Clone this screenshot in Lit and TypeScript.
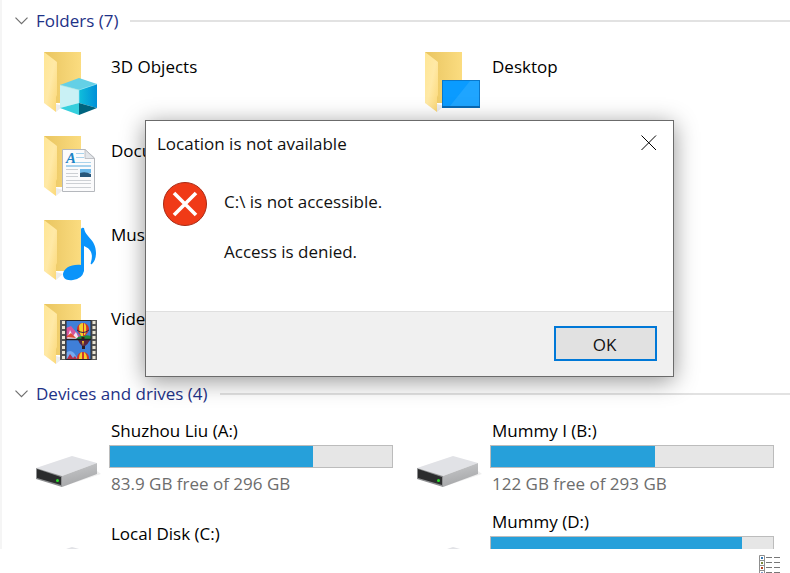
import { LitElement, html, css, svg, nothing } from "lit";
import { customElement, property } from "lit/decorators.js";

type Overlay = "cube" | "screen" | "document" | "note" | "film";

interface Folder {
  name: string;
  overlay: Overlay;
  first: boolean;
}

interface Drive {
  name: string;
  used?: number;
  free?: string;
}

const FOLDERS: Folder[] = [
  { name: "3D Objects", overlay: "cube", first: true },
  { name: "Desktop", overlay: "screen", first: false },
  { name: "Documents", overlay: "document", first: true },
  { name: "Music", overlay: "note", first: true },
  { name: "Videos", overlay: "film", first: true },
];

const DRIVES: Drive[] = [
  { name: "Shuzhou Liu (A:)", used: 72, free: "83.9 GB free of 296 GB" },
  { name: "Mummy I (B:)", used: 58, free: "122 GB free of 293 GB" },
  { name: "Local Disk (C:)" },
  { name: "Mummy (D:)", used: 89 },
];

const balloon = (x: number, y: number) => svg`
  <g transform="translate(${x} ${y})">
    <path d="M-6 -1a6 6 0 0 1 12 0c0 3-3 5-4 7h-4c-1-2-4-4-4-7z" fill="#d3342a"/>
    <path d="M-4 -4Q-4 2-2 6H0V-7Q-3-7-4-4z" fill="#f3cf2c"/>
    <path d="M1 -7Q4-6 3 2L2 5H1z" fill="#f3cf2c"/>
    <path d="M-6 0Q0 5 6 0" stroke="#30204f" stroke-width="1" fill="none"/>
    <rect x="-1.5" y="7" width="3" height="3" fill="#3a1c14"/>
  </g>`;

const OVERLAYS = {
  cube: svg`
    <path d="M44 27L62 33 44 39 25 34z" fill="#64d0e6"/>
    <path d="M25 34L44 39V52L25 57z" fill="#c9f1f5"/>
    <path d="M44 39L62 33V57L44 52z" fill="url(#cubeSide)"/>
    <path d="M25 57L44 52V64z" fill="#35cfdd"/>
    <path d="M44 52L62 57 44 64z" fill="#00647f"/>
    <path d="M25 34L44 39 62 33M44 39V52" stroke="#9be6f2" stroke-width=".6" fill="none"/>`,
  screen: svg`
    <rect x="26" y="29" width="38" height="28" fill="#0a78cc"/>
    <rect x="27" y="30" width="36" height="25" fill="#0a9bff"/>
    <path d="M63 30V55H34L54 30z" fill="#1fa5ff"/>
    <path d="M26 56h38" stroke="#065a9c" stroke-width="1"/>`,
  document: svg`
    <path d="M27.5 14.5H50L59.5 23V56.5H27.5z" fill="#fbfbfc" stroke="#b5b8bd"/>
    <path d="M50 14.5V23.5H59.5z" fill="#e3e6ea" stroke="#b5b8bd" stroke-width=".8"/>
    <path d="M41 18.5h8M41 22.5h8M41 27.5h15" stroke="#a9d3ec"/>
    <path d="M31 31h25" stroke="#8cc5e8" stroke-width="1.5"/>
    <path d="M31 34.5h12M31 38.5h12M31 41.5h12M31 45.5h25M31 48.5h25M31 52.5h25" stroke="#cdd0d4"/>
    <rect x="45" y="34" width="11" height="4" fill="#6db9ea"/>
    <path d="M45 38q5-2 11 1v3H45z" fill="#27577b"/>
    <text x="31" y="28" class="letter">A</text>`,
  note: svg`
    <path d="M46 10Q47 8 49 9C50 18 61 20 61 34Q61 41 57 45Q55 46 56 43C59 33 54 29 49 27V52Q47 60 38 61C31 62 28 59 28 55C29 49 36 45 46 46z" fill="#0a94fa"/>`,
  film: svg`
    <rect x="25" y="17" width="37" height="40" fill="#555"/>
    <path d="M28.5 18V57M59 18V57" stroke="#e9e4d4" stroke-width="3" stroke-dasharray="3 2"/>
    <rect x="31" y="18" width="25" height="18" fill="#3f7fd8"/>
    <path d="M31 25l5-2 5 6 4 4v3H31z" fill="#d7559c"/>
    <path d="M32 36l3-9 3 6 3-4 3 7z" fill="#f2e6f4"/>
    <path d="M31 34l5-4 5 5z" fill="#e04b35"/>
    <path d="M43 34q7-3 13-1v3H41z" fill="#238a3b"/>
    ${balloon(48, 27)}
    <rect x="31" y="37" width="25" height="19" fill="#3f7fd8"/>
    <path d="M43 37h12q-2 4-5 6h-3q-3-3-4-6z" fill="#5b2440"/>
    <path d="M47 38h2l-1 5z" fill="#efc32b"/>
    <rect x="47" y="43" width="3" height="3" fill="#2a1a22"/>
    <path d="M31 50q4-4 8 0l4 6H31z" fill="#75a9ee"/>
    <path d="M32 56l3-5 3 4 2-2 2 3z" fill="#b4314c"/>
    <path d="M42 55a6 6 0 0 1 12 0v1H42z" fill="#d3342a"/>
    <path d="M44 56q0-6 3-7v7zM49 49q3 2 3 7h-3z" fill="#f3cf2c"/>
    <path d="M31 36.5h25" stroke="#1c1c22" stroke-width="1.5"/>
    <path d="M31 17V57M56 17V57M31 56.5H56M31 17.5H56" stroke="#26262b" stroke-width="1"/>`,
};

@customElement("folder-tile")
export class FolderTile extends LitElement {
  @property() name = "";
  @property() overlay: Overlay = "cube";

  static styles = css`
    :host {
      display: flex;
      gap: 12px;
      height: 84px;
      box-sizing: border-box;
      padding-top: 9px;
    }
    .icon {
      width: 64px;
      height: 64px;
      flex: none;
      overflow: visible;
    }
    .letter {
      font: italic bold 15px "Liberation Serif", serif;
      fill: #1d84c6;
    }
    .name {
      padding-top: 4px;
      line-height: 24px;
      white-space: nowrap;
    }
  `;

  render() {
    return html`
      <svg class="icon" viewBox="0 0 64 64" aria-hidden="true">
        <defs>
          <linearGradient id="back" x1="0" y1="0" x2="1" y2="0">
            <stop offset="0" stop-color="#e9c560" />
            <stop offset="1" stop-color="#fbdc80" />
          </linearGradient>
          <linearGradient id="front" x1="0" y1="0" x2="1" y2="1">
            <stop offset="0" stop-color="#ffe694" />
            <stop offset=".5" stop-color="#ffe9a6" />
            <stop offset="1" stop-color="#fbd775" />
          </linearGradient>
          <linearGradient id="cubeSide" x1="0" y1="0" x2="1" y2="0">
            <stop offset="0" stop-color="#10bedb" />
            <stop offset="1" stop-color="#0090d8" />
          </linearGradient>
        </defs>
        <path d="M21 61L28 55 21 53z" fill="#ededed" />
        <path d="M9 1H46V52H9z" fill="url(#back)" />
        <path d="M9 1L22 11V44L21 46V61L9 52z" fill="url(#front)" />
        ${OVERLAYS[this.overlay]}
      </svg>
      <span class="name">${this.name}</span>
    `;
  }
}

@customElement("drive-tile")
export class DriveTile extends LitElement {
  @property({ attribute: false }) drive!: Drive;

  static styles = css`
    :host {
      display: flex;
      gap: 10px;
      height: 91px;
      box-sizing: border-box;
      padding-top: 10px;
    }
    .icon {
      width: 64px;
      height: 32px;
      flex: none;
      margin-top: 37px;
      overflow: visible;
    }
    .info {
      flex: 1;
      min-width: 0;
      display: flex;
      flex-direction: column;
    }
    .plain {
      padding-top: 12px;
    }
    .text {
      padding-left: 2px;
      line-height: 24px;
      white-space: nowrap;
    }
    .free {
      color: #6d6d6d;
    }
    .bar {
      height: 23px;
      margin: 2px 0 4px;
      box-sizing: border-box;
      border: 1px solid #bcbcbc;
      background: #e6e6e6;
    }
    .fill {
      height: 100%;
      background: #26a0da;
    }
  `;

  render() {
    const { name, used, free } = this.drive;
    return html`
      <svg class="icon" viewBox="0 0 64 32" aria-hidden="true">
        <defs>
          <linearGradient id="side" x1="0" y1="0" x2=".3" y2="1">
            <stop offset="0" stop-color="#c9cacc" />
            <stop offset="1" stop-color="#a6a7a9" />
          </linearGradient>
        </defs>
        <path d="M62 15L66 18 27 31z" fill="#efefef" />
        <path d="M1 12L37 0 62 7 27 20z" fill="#e1e2e6" />
        <path d="M27 20L62 7V18L27 31z" fill="url(#side)" />
        <path d="M1 12L27 20V31L1 23z" fill="#8e8f91" />
        <path d="M2 13L26 21V29L2 22z" fill="#2b2c2d" />
        <circle cx="22.5" cy="24.5" r="1.5" fill="#2be02b" />
      </svg>
      <div class="info ${used === undefined ? "plain" : ""}">
        <span class="text">${name}</span>
        ${used === undefined
          ? nothing
          : html`<div
              class="bar"
              role="meter"
              aria-label=${name}
              aria-valuemin="0"
              aria-valuemax="100"
              aria-valuenow=${used}
            >
              <div class="fill" style="width:${used}%"></div>
            </div>`}
        ${free ? html`<span class="text free">${free}</span>` : nothing}
      </div>
    `;
  }
}

@customElement("error-dialog")
export class ErrorDialog extends LitElement {
  static styles = css`
    :host {
      display: block;
      box-sizing: border-box;
      border: 1px solid #6b6b6b;
      background: #fff;
      box-shadow: 0 4px 22px rgba(0, 0, 0, 0.42);
      color: #111;
    }
    .titlebar {
      display: flex;
      align-items: center;
      justify-content: space-between;
      height: 46px;
      padding: 0 8px 0 11px;
    }
    .title {
      margin: 0;
      font: inherit;
    }
    .close {
      display: flex;
      align-items: flex-start;
      justify-content: center;
      width: 32px;
      height: 32px;
      padding: 7px 0 0;
      border: 0;
      background: none;
    }
    .body {
      display: flex;
      gap: 16px;
      padding: 14px 16px 16px;
      height: 144px;
      box-sizing: border-box;
    }
    .badge {
      flex: none;
      width: 46px;
      height: 46px;
    }
    .message {
      display: flex;
      flex-direction: column;
      gap: 26px;
      padding-top: 9px;
    }
    .line {
      margin: 0;
      line-height: 24px;
    }
    .footer {
      display: flex;
      justify-content: flex-end;
      padding: 14px 16px 15px;
      border-top: 1px solid #dfdfdf;
      background: #f0f0f0;
    }
    .ok {
      width: 103px;
      height: 35px;
      padding: 2px 2px 0 0;
      border: 2px solid #0078d7;
      background: #e1e1e1;
      color: #111;
      font: inherit;
    }
  `;

  render() {
    return html`
      <header class="titlebar">
        <h2 class="title">Location is not available</h2>
        <button class="close" aria-label="Close">
          <svg width="16" height="16" viewBox="0 0 16 16" aria-hidden="true">
            <path d="M.5 .5L15 15M15 .5L.5 15" stroke="#000" stroke-width="1" />
          </svg>
        </button>
      </header>
      <div class="body">
        <svg class="badge" viewBox="0 0 46 46" aria-hidden="true">
          <circle cx="23" cy="23" r="21.5" fill="#f03a17" stroke="#a92a14" />
          <path d="M12 12L34 34M34 12L12 34" stroke="#fff" stroke-width="3.6" />
        </svg>
        <div class="message">
          <p class="line">C:\\ is not accessible.</p>
          <p class="line">Access is denied.</p>
        </div>
      </div>
      <footer class="footer"><button class="ok">OK</button></footer>
    `;
  }
}

@customElement("app-root")
export class AppRoot extends LitElement {
  static styles = css`
    :host {
      display: flex;
      flex-direction: column;
      position: relative;
      height: 100vh;
      overflow: hidden;
      background: #fff;
      color: #000;
      font: 17px/24px "Open Sans", "Noto Sans", sans-serif;
    }
    .content {
      flex: 1;
      min-height: 0;
      overflow: hidden;
      border-left: 2px solid #f5f5f5;
    }
    .heading {
      display: flex;
      align-items: center;
      gap: 12px;
      margin: 0;
      padding-left: 13px;
      font: inherit;
      color: #1e3287;
    }
    .heading::after {
      content: "";
      flex: 1;
      height: 2px;
      background: #e2e2e2;
    }
    .toggle {
      display: flex;
      align-items: center;
      gap: 8px;
      padding: 0;
      border: 0;
      background: none;
      color: inherit;
      font: inherit;
    }
    .folders-heading {
      height: 42px;
    }
    .drives-heading {
      height: 31px;
    }
    .grid {
      display: grid;
      grid-template-columns: 1fr 1fr;
      column-gap: 23px;
      padding: 0 16px 0 33px;
    }
    .first {
      grid-column: 1;
    }
    .status {
      display: flex;
      justify-content: flex-end;
      height: 24px;
      box-sizing: border-box;
      padding: 6px 10px 0 0;
      background: #fff;
    }
    .view {
      width: 21px;
      height: 18px;
      padding: 0;
      border: 0;
      background: none;
      overflow: hidden;
    }
    .view-icon {
      display: block;
    }
    .dialog {
      position: absolute;
      left: 145px;
      top: 120px;
      width: 529px;
    }
  `;

  private heading(label: string, cls: string) {
    return html`<h2 class="heading ${cls}">
      <button class="toggle" aria-expanded="true">
        <svg width="13" height="8" viewBox="0 0 13 8" aria-hidden="true">
          <path d="M.5 .7L6.5 6.7 12.5 .7" fill="none" stroke="#6f6f6f" stroke-width="1.2" />
        </svg>
        ${label}
      </button>
    </h2>`;
  }

  render() {
    return html`
      <main class="content">
        ${this.heading("Folders (7)", "folders-heading")}
        <div class="grid">
          ${FOLDERS.map(
            (f) => html`<folder-tile
              class=${f.first ? "first" : ""}
              .name=${f.name}
              .overlay=${f.overlay}
            ></folder-tile>`
          )}
        </div>
        ${this.heading("Devices and drives (4)", "drives-heading")}
        <div class="grid">
          ${DRIVES.map((d) => html`<drive-tile .drive=${d}></drive-tile>`)}
        </div>
      </main>
      <footer class="status">
        <button class="view" aria-label="Details view">
          <svg class="view-icon" width="21" height="21" viewBox="0 0 21 21" aria-hidden="true">
            <path d="M.5 .5h5v20h-5zM.5 5.5h5M.5 10.5h5M.5 15.5h5" fill="#fff" stroke="#8f8f8f" />
            <path d="M7 2.5h6M15 2.5h6M7 7.5h6M15 7.5h6M7 12.5h6M15 12.5h6M7 17.5h6M15 17.5h6" stroke="#777" />
            <path d="M2 2h2v2h-2z" fill="#3379b5" />
            <path d="M2 7h2v2h-2z" fill="#7c8a3a" />
            <path d="M2 12h2v2h-2z" fill="#b8431f" />
            <path d="M2 17h2v2h-2z" fill="#7d9cc9" />
          </svg>
        </button>
      </footer>
      <error-dialog class="dialog" role="alertdialog" aria-label="Location is not available"></error-dialog>
    `;
  }
}
